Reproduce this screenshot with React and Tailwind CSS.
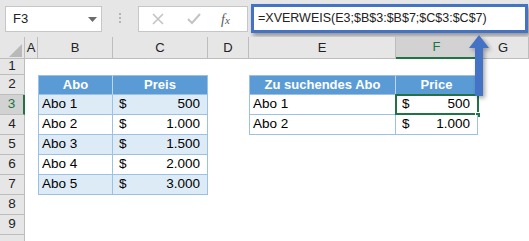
import React from "react";

const font = { fontFamily: '"Liberation Sans", Arial, sans-serif' };

const colLetters = ["A", "B", "C", "D", "E", "F", "G"];

// cell content per row (index by column letter)
const sheet = {
  2: { B: { head: "Abo" }, C: { head: "Preis" }, E: { head: "Zu suchendes Abo" }, F: { head: "Price" } },
  3: { B: { text: "Abo 1", band: true }, C: { money: "500", band: true }, E: { text: "Abo 1" }, F: { money: "500", selected: true } },
  4: { B: { text: "Abo 2" }, C: { money: "1.000" }, E: { text: "Abo 2" }, F: { money: "1.000" } },
  5: { B: { text: "Abo 3", band: true }, C: { money: "1.500", band: true } },
  6: { B: { text: "Abo 4" }, C: { money: "2.000" } },
  7: { B: { text: "Abo 5", band: true }, C: { money: "3.000", band: true } },
};

const firstCol = { B: true, E: true };

const Cell = ({ row, col }) => {
  const c = sheet[row] && sheet[row][col];
  if (!c) return <div className="bg-white" />;
  const left = firstCol[col] ? "border-l" : "";
  if (c.head) {
    return (
      <div
        className={`bg-[#5b9bd5] text-white font-bold text-[13px] flex items-center justify-center border-t border-b border-[#9bc2e6] ${left} ${
          firstCol[col] ? "border-r border-r-[#bdd7ee]" : "border-r"
        }`}
      >
        {c.head}
      </div>
    );
  }
  const bg = c.band ? "bg-[#ddebf7]" : "bg-white";
  if (c.money) {
    return (
      <div className={`relative ${bg} border-r border-b border-[#9bc2e6] ${left} flex items-center justify-between pl-[6px] pr-[7px] text-[13.5px] text-black`}>
        <span>$</span>
        <span>{c.money}</span>
        {c.selected && (
          <>
            <div className="absolute -left-px -top-px -right-[2px] -bottom-px border-2 border-[#217346]" />
            <div className="absolute -right-[4px] -bottom-[4px] w-[6px] h-[6px] bg-[#217346] border border-white" />
          </>
        )}
      </div>
    );
  }
  return (
    <div className={`${bg} border-r border-b border-[#9bc2e6] ${left} flex items-center pl-[3px] text-[13.5px] text-black`}>
      {c.text}
    </div>
  );
};

const App = () => (
  <div className="relative w-[529px] h-[241px] overflow-hidden bg-white" style={font}>
    {/* Formula bar area */}
    <div className="h-[37px] bg-[#e6e6e6] flex items-start">
      <div className="mt-[6px] ml-[5px] w-[97px] h-[26px] bg-white border border-[#c6c6c6] flex items-center justify-between pl-[7px] pr-[4px] text-[13px] text-[#222]">
        <span>F3</span>
        <svg width="9" height="5" viewBox="0 0 9 5">
          <path d="M0 0 L9 0 L4.5 5 Z" fill="#6b6b6b" />
        </svg>
      </div>
      <div className="w-[36px] h-[37px] flex flex-col items-center justify-center gap-[2px] pb-[1px]">
        <span className="w-[2px] h-[2px] bg-[#b4b4b4]" />
        <span className="w-[2px] h-[2px] bg-[#b4b4b4]" />
        <span className="w-[2px] h-[2px] bg-[#b4b4b4]" />
      </div>
      <div className="mt-[6px] w-[110px] h-[26px] bg-white border border-[#c6c6c6] flex items-center">
        <svg className="ml-[13px]" width="12" height="12" viewBox="0 0 12 12">
          <path d="M1 1 L11 11 M11 1 L1 11" stroke="#c3c3c3" strokeWidth="1.6" />
        </svg>
        <svg className="ml-[23px]" width="14" height="12" viewBox="0 0 14 12">
          <path d="M1 6 L5 10 L13 1" stroke="#c3c3c3" strokeWidth="2" fill="none" />
        </svg>
        <span className="ml-[20px] text-[14px] italic text-[#5a5a5a]" style={{ fontFamily: '"Liberation Serif", serif' }}>
          f<span className="text-[11px]">x</span>
        </span>
      </div>
      <div className="mt-[4px] ml-[3px] w-[277px] h-[29px] bg-white border-[3px] border-[#4472c4] shadow-[2px_3px_4px_rgba(0,0,0,0.35)] flex items-center pl-[4px] text-[12.5px] text-[#222] whitespace-nowrap">
        =XVERWEIS(E3;$B$3:$B$7;$C$3:$C$7)
      </div>
    </div>

    {/* Grid */}
    <div className="grid grid-cols-[25px_13px_75px_95px_41px_147px_82px_1fr] grid-rows-[22px_16px_repeat(9,20px)]">
      {/* column header row */}
      <div className="relative bg-[#e6e6e6] border-r border-b border-[#bdbdbd]">
        <svg className="absolute right-[2px] bottom-[1px]" width="13" height="13" viewBox="0 0 13 13">
          <path d="M13 0 L13 13 L0 13 Z" fill="#b9b9b9" />
        </svg>
      </div>
      {colLetters.map((l) =>
        l === "F" ? (
          <div key={l} className="bg-[#d2d2d2] border-r border-[#bdbdbd] border-b-2 border-b-[#217346] flex items-center justify-center text-[13px] text-[#217346]">
            {l}
          </div>
        ) : (
          <div key={l} className="bg-[#e6e6e6] border-r border-b border-[#bdbdbd] flex items-center justify-center text-[13px] text-[#222]">
            {l}
          </div>
        )
      )}

      {[1, 2, 3, 4, 5, 6, 7, 8, 9, 10].map((r) => (
        <React.Fragment key={r}>
          {r === 3 ? (
            <div className="bg-[#d2d2d2] border-b border-[#bdbdbd] border-r-2 border-r-[#217346] flex items-center justify-center text-[13.5px] text-[#217346]">
              {r}
            </div>
          ) : (
            <div className="bg-[#e6e6e6] border-b border-r border-[#bdbdbd] flex items-center justify-center text-[13.5px] text-[#222]">
              {r < 10 ? r : ""}
            </div>
          )}
          {colLetters.map((l) => (
            <Cell key={l} row={r} col={l} />
          ))}
        </React.Fragment>
      ))}
    </div>

    {/* annotation arrow */}
    <svg
      className="absolute left-[468px] top-[34px]"
      width="26"
      height="66"
      viewBox="0 0 26 66"
      style={{ filter: "drop-shadow(2px 2px 2px rgba(0,0,0,0.35))" }}
    >
      <path d="M11 1 L21 14 L15 14 L15 62 L7 62 L7 14 L1 14 Z" fill="#4472c4" />
    </svg>
  </div>
);

export default App;
